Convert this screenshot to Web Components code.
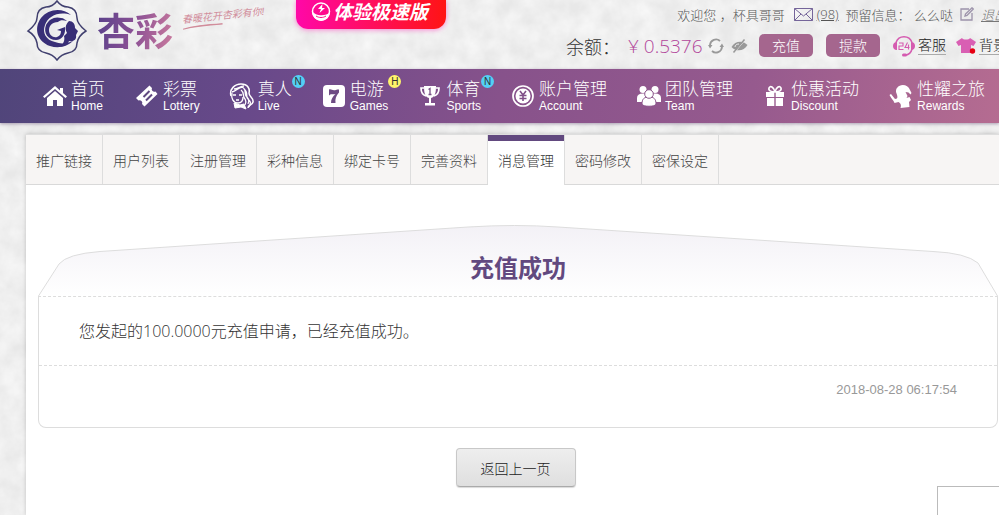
<!DOCTYPE html>
<html lang="zh-CN">
<head>
<meta charset="utf-8">
<title>杏彩 - 消息管理</title>
<style>
  html, body {
    margin: 0;
    height: 100%;
  }
  body {
    overflow: hidden;
    background: #eeeeee;
    color: #666;
    font: 14px "Open Sans", "Noto Sans CJK SC", sans-serif;
  }
</style>
</head>
<body>
<app-page>
  <site-header slot="header"></site-header>
  <main-nav slot="nav">
    <nav-item icon="home" label="首页" sub="Home"></nav-item>
    <nav-item icon="ticket" label="彩票" sub="Lottery"></nav-item>
    <nav-item icon="live" label="真人" sub="Live" badge="N"></nav-item>
    <nav-item icon="seven" label="电游" sub="Games" badge="H"></nav-item>
    <nav-item icon="cup" label="体育" sub="Sports" badge="N"></nav-item>
    <nav-item icon="coin" label="账户管理" sub="Account"></nav-item>
    <nav-item icon="team" label="团队管理" sub="Team"></nav-item>
    <nav-item icon="gift" label="优惠活动" sub="Discount"></nav-item>
    <nav-item icon="rewards" label="性耀之旅" sub="Rewards"></nav-item>
  </main-nav>
  <tab-bar>
    <tab-item>推广链接</tab-item>
    <tab-item>用户列表</tab-item>
    <tab-item>注册管理</tab-item>
    <tab-item>彩种信息</tab-item>
    <tab-item>绑定卡号</tab-item>
    <tab-item>完善资料</tab-item>
    <tab-item active>消息管理</tab-item>
    <tab-item>密码修改</tab-item>
    <tab-item>密保设定</tab-item>
  </tab-bar>
  <message-card>
    <span slot="title">充值成功</span>
    您发起的100.0000元充值申请，已经充值成功。
    <time slot="time" datetime="2018-08-28T06:17:54">2018-08-28 06:17:54</time>
  </message-card>
  <back-button>返回上一页</back-button>
</app-page>

<script>
const icons = {
  home: `<svg width="24" height="22" viewBox="0 0 24 22" fill="#fff"><path d="M12 1 0 11.500l1.500 1.500L12 4l10.500 9 1.500-1.500-4-3.500V3h-3v2.500z"/><path d="M12 6 4 13v8h6v-6h4v6h6v-8z"/></svg>`,
  ticket: `<svg width="24" height="24" viewBox="0 0 24 24"><path fill="#fff" d="M14.500 1.500 17 4a2.600 2.600 0 0 0 3.500 3.500L22.500 10 9.500 22.500 7 20a2.600 2.600 0 0 0-3.500-3.500L1 14z"/><path d="m8.500 13 6-6m-3.500 9.500 6-6" stroke="#604980" stroke-width="2"/></svg>`,
  live: `<svg width="26" height="27" viewBox="0 0 26 27" fill="none" stroke="#fff"><path d="M2 13C0 6 6 1 12 1c7 0 9 5 8 9 0 4 5 5 4 9-1 4-5 2-5 6" stroke-width="1.500"/><path d="M3 9c4-1 6-4 10-5 5 2 2 6 4 9 2 2 4 4 2 8M5 6c4 0 6-3 10-3M15 6c5 4 1 7 4 10 3 3 3 4 1 8M12 7c4 3 1 6 4 9 1 2 2 3 0 6" stroke-width="1.300"/><path d="M3 10c-1 5 1 10 6 10 4 0 5-3 5-6M4 12h3m3 0h3M7 17h3" stroke-width="1.300"/><path d="m5 20 6 2 4-1 2 5-5-2-6 1z" fill="#fff"/></svg>`,
  seven: `<svg width="22" height="22" viewBox="0 0 22 22"><rect width="22" height="22" rx="4" fill="#fff"/><path fill="#6d4b83" d="M6 4.500c2-.8 3 .8 5 .8 1.500 0 2-.8 5-.8v3c-3 3.500-4 6-3.500 10.500H8c0-4 1.500-6 4.500-9-2.500 1-4.500-1-6.500 1.500z"/></svg>`,
  cup: `<svg width="20" height="22" viewBox="0 0 20 22"><path d="M4 3H1c0 5 2 7 5 8m10-8h3c0 5-2 7-5 8" fill="none" stroke="#fff" stroke-width="1.700"/><path fill="#fff" d="M4 1h12c0 7-1 11-5 12v5h4v2.500H5V18h4v-5C5 12 4 8 4 1z"/><path d="m8.500 4.500 1.500-1v6M8.500 9.500h3" stroke="#765084" stroke-width="1.300" fill="none"/></svg>`,
  coin: `<svg width="22" height="22" viewBox="0 0 22 22"><circle cx="11" cy="11" r="10" fill="none" stroke="#fff" stroke-width="1.700"/><circle cx="11" cy="11" r="7.500" fill="#fff"/><path d="m8 6 3 4 3-4M7.500 10.500h7m-7 3h7M11 10v6" stroke="#805088" stroke-width="1.600" fill="none"/></svg>`,
  team: `<svg width="24" height="22" viewBox="0 0 24 22"><g fill="#fff"><circle cx="6" cy="4.500" r="3.500"/><circle cx="18" cy="4.500" r="3.500"/><path d="M0 17v-4c0-3 2-4.500 6-4.500S10 10 10 17zM14 17c0-7 0-8.500 4-8.500s6 1.500 6 4.500v4z"/></g><g fill="#fff" stroke="#8b548a"><path d="M5 19c0-5 2-7 7-7s7 2 7 7c0 3-14 3-14 0z"/><circle cx="12" cy="9" r="4.300"/></g></svg>`,
  gift: `<svg width="20" height="22" viewBox="0 0 20 22"><path fill="#fff" d="M1 7h8.300v5H1zM10.700 7H19v5h-8.300zM2 13h7.300v8H2zM10.700 13H18v8h-7.300z"/><path d="M10 7C7 7 3 6 4 3c1-3 5-1 6 4 1-5 5-7 6-4 1 3-3 4-6 4z" fill="none" stroke="#fff" stroke-width="1.600"/></svg>`,
  rewards: `<svg width="24" height="25" viewBox="0 0 24 25" fill="#fff"><path d="M8 4c4-5 11-3 13 2l1.500 3-1 1.500-2-2-3-.5 2 4-1 2 3-1 1.500 3-2 2 .5 5-9 1c1-3 0-5-2-6l-4 1c-1-3-3-4-5-8l1.500-1L6 15c4 0 2-4 1-7 0-2 0-3 1-4z"/></svg>`,
  mail: `<svg width="19" height="13" viewBox="0 0 19 13" fill="none" stroke="#75659a"><path d="M.5.5h18v12H.5zL9.500 8l9-7.500M.5 12.500 7 6m5 0 6.500 6.500"/></svg>`,
  edit: `<svg width="14" height="14" viewBox="0 0 14 14" fill="none" stroke="#9c93aa" stroke-width="1.300"><path d="M9 2H1v11h11V6"/><path d="m5 9 .5-2L12 .8 13.300 2 7 8.500z"/></svg>`,
  refresh: `<svg width="16" height="16" viewBox="0 0 16 16" fill="none" stroke="#999" stroke-width="1.800"><path d="M2 9V7a6 6 0 0 1 10-4M14 7v2a6 6 0 0 1-10 4"/><path d="M0 7h4.500L2 10.500zM11.500 9H16l-2-3.500z" fill="#999" stroke="none"/></svg>`,
  eye: `<svg width="17" height="14" viewBox="0 0 17 14"><path d="M.5 8C4 1.500 12 1 16.500 6 13 12.500 5 13 .5 8z" fill="#999"/><path d="M4 8c0-2 2-3 4-3" stroke="#eee" fill="none"/><path d="M3.500 13.500 14.500.5" stroke="#eee" stroke-width="1"/><path d="M2.500 13.500 13.500 .5" stroke="#999" stroke-width="1.500"/></svg>`,
  service: `<svg width="22" height="22" viewBox="0 0 22 22"><path d="M3 7.500a8.500 8.500 0 0 1 16 0M19 14c-1 4-4 6-7 6" fill="none" stroke="#d55bb0" stroke-width="1.500"/><path fill="#d55bb0" d="M4 7v8C1 15 0 13 0 11s1-4 4-4zM18 7v8c3 0 4-2 4-4s-1-4-4-4z"/><rect x="9" y="18.500" width="5" height="3" rx="1.500" fill="#d55bb0"/><path d="M6 8h4v3H6v3.500h4.500M14.500 7.500 12 12.500h4.500M15.500 9.500v5" fill="none" stroke="#d55bb0" stroke-width="1.100"/></svg>`,
  shirt: `<svg width="20" height="17" viewBox="0 0 20 17"><path fill="#d95fb3" d="M6 1c1 2 7 2 8 0l6 4-2.500 4-2.500-1v8H5V8L2.500 9 0 5z"/><circle cx="16.500" cy="14" r="2.700" fill="#e60012"/></svg>`,
  bolt: `<svg width="20" height="20" viewBox="0 0 20 20"><circle cx="10" cy="9.500" r="8.500" fill="none" stroke="#fff" stroke-width="1.500"/><path d="M1 9c3 5 14 6 18 1-1 12-17 12-18-1z" fill="#fff"/><path d="M11.500 2 7 7h3l-1.500 4L14 6h-3z" fill="#fff"/><path d="M5 14c3 2 7 2 10 0" stroke="#fb1488" fill="none"/></svg>`,
  logo: `<svg width="62" height="62" viewBox="0 0 62 62"><path fill="none" stroke="#41406f" stroke-width="1.500" d="M31 1c3 4 7 6 11 6 6 1 9 5 9 11 0 5 4 9 9 13-5 3-8 7-9 12 0 6-3 9-9 10-5 1-8 3-11 7-3-4-6-6-11-7-6-1-9-4-9-10-1-5-4-9-9-12 5-4 9-8 9-13 0-6 3-10 9-11 4 0 8-2 11-6z"/><path fill="#382e77" d="M45 15C36 7 22 9 15 18c-8 11-3 24 9 28 9 3 18 0 23-5-7 3-13 3-18 1-9-2-13-9-10-17 3-9 14-14 26-10z"/><path fill="#382e77" d="M20 25c3-6 9-9 15-7 3 0 4 2 6 3-4-1-7-1-9 1-6 0-9 4-9 8 0 5 4 8 8 7 3-1 4-3 4-6l-4-1 8-3c1 7-3 13-9 13-8 0-13-7-10-15z"/><path fill="#382e77" d="M43 21c4 0 6 3 6 7l3 3-2 4c1 5-3 7-7 6-1 4-5 5-9 6 4-4 5-7 4-11l3-3c-2-4-2-8 2-12z"/></svg>`
};

function define(name, css, html) {
  customElements.define(name, class extends HTMLElement {
    connectedCallback() {
      if (this.shadowRoot) return;
      const root = this.attachShadow({mode: 'open'});
      root.innerHTML = `
        <style>
          * { box-sizing: border-box; }
          ${css}
        </style>
        ${typeof html === 'function' ? html(this) : html}
      `;
    }
  });
}

define('ui-icon', `
  :host { display: inline-flex; flex: none; }
  svg { display: block; }
`, el => icons[el.getAttribute('name')].replace('<svg', '<svg aria-hidden="true"'));

define('app-page', `
  :host {
    display: flex;
    flex-direction: column;
    min-height: 100vh;
    position: relative;
    overflow: hidden;
    font-weight: 300;
  }
  .paper {
    position: absolute;
    inset: 0;
    width: 100%;
    height: 100%;
    z-index: -1;
  }
  main {
    flex: 1;
    margin: 11px 0 0 26px;
    background: #fff;
    border-top: 1px solid #dedede;
    box-shadow: 0 0 4px rgba(0, 0, 0, .2);
  }
  .float {
    position: absolute;
    right: 0;
    bottom: 0;
    width: 62px;
    height: 29px;
    background: #fff;
    border: solid #bbb;
    border-width: 1px 0 0 1px;
  }
`, `
  <svg class="paper" aria-hidden="true">
    <filter id="grain" x="0" y="0" width="100%" height="100%">
      <feTurbulence type="fractalNoise" baseFrequency=".05" numOctaves="4" seed="4"/>
      <feColorMatrix values="0 0 0 0 1  0 0 0 0 1  0 0 0 0 1  1 0 0 0 -.200"/>
    </filter>
    <rect width="100%" height="100%" fill="#e8e8e8"/>
    <rect width="100%" height="100%" filter="url(#grain)"/>
  </svg>
  <slot name="header"></slot>
  <slot name="nav"></slot>
  <main><slot></slot></main>
  <div class="float"></div>
`);

define('site-header', `
  :host {
    display: flex;
    align-items: flex-start;
    height: 69px;
    padding-left: 26px;
  }
  brand-logo { width: 270px; flex: none; }
  account-bar { margin-left: 120px; flex: none; }
`, `
  <brand-logo></brand-logo>
  <promo-link>体验极速版</promo-link>
  <account-bar></account-bar>
`);

define('brand-logo', `
  :host { display: flex; align-items: flex-start; gap: 9px; }
  .name {
    margin-top: 4px;
    font-size: 38px;
    line-height: 52px;
    font-weight: 700;
    background: linear-gradient(100deg, #57408a, #8c5195 50%, #cc7c9e);
    -webkit-background-clip: text;
    background-clip: text;
    color: transparent;
  }
  .slogan {
    color: #d18c9b;
    font-size: 10px;
    line-height: 14px;
    font-weight: 400;
    font-style: italic;
    white-space: nowrap;
    margin-top: 8px;
    transform: rotate(-6deg);
  }
  .slogan svg { display: block; }
`, `
  <ui-icon name="logo"></ui-icon>
  <span class="name">杏彩</span>
  <span class="slogan">春暖花开杏彩有你!
    <svg width="40" height="4" viewBox="0 0 40 4"><path d="M0 3Q14 0 40 2 14 1 0 3z" fill="#d18c9b" stroke="#d18c9b"/></svg>
  </span>
`);

define('promo-link', `
  :host { display: block; flex: none; }
  a {
    display: flex;
    align-items: center;
    gap: 2px;
    width: 150px;
    height: 29px;
    padding: 0 0 5px 15px;
    border-radius: 0 0 12px 12px;
    background: linear-gradient(90deg, #ff08a8, #ff1414);
    box-shadow: 0 1px 5px rgba(255, 60, 190, .6);
    color: #fff;
    font-size: 19px;
    font-weight: 700;
    font-style: italic;
    line-height: 24px;
    white-space: nowrap;
    text-decoration: none;
  }
`, `<a href="#"><ui-icon name="bolt"></ui-icon><slot></slot></a>`);

define('account-bar', `
  :host {
    display: flex;
    flex-direction: column;
    align-items: flex-end;
    gap: 9px;
    padding-top: 4px;
    white-space: nowrap;
  }
  .row { display: flex; align-items: center; }
  .top { height: 20px; gap: 7px; font-size: 13px; color: #555; }
  .top a { color: #555; }
  .mail { display: flex; align-items: center; gap: 4px; margin-left: 2px; }
  .top .exit { font-style: italic; color: #777; }
  .money { height: 25px; }
  .label { color: #333; font-size: 18px; width: 62px; }
  .sum { color: #b2479b; font-size: 19px; width: 80px; }
  .tools { gap: 7px; display: flex; align-items: center; margin-right: 11px; }
  button {
    border: 0;
    padding: 0;
    background: none;
    display: flex;
    font: inherit;
  }
  .pill {
    width: 54px;
    height: 23px;
    justify-content: center;
    align-items: center;
    margin-right: 13px;
    border-radius: 5px;
    background: #a5668e;
    color: #fff;
    font-size: 14px;
    line-height: 20px;
  }
  .link {
    display: flex;
    align-items: center;
    gap: 3px;
    color: #222;
    font-size: 14px;
    line-height: 18px;
    text-decoration: none;
  }
  .link span { border-bottom: 1px solid #aaa; }
  .link + .link { margin-left: 10px; }
`, `
  <div class="row top">
    <span>欢迎您 ，杯具哥哥</span>
    <span class="mail"><ui-icon name="mail"></ui-icon><a href="#">(98)</a></span>
    <span>预留信息： 么么哒</span>
    <button aria-label="修改"><ui-icon name="edit"></ui-icon></button>
    <a class="exit" href="#">退出</a>
  </div>
  <div class="row money">
    <span class="label">余额：</span>
    <span class="sum">¥ 0.5376</span>
    <span class="tools">
      <button aria-label="刷新"><ui-icon name="refresh"></ui-icon></button>
      <button aria-label="隐藏"><ui-icon name="eye"></ui-icon></button>
    </span>
    <button class="pill">充值</button>
    <button class="pill">提款</button>
    <a class="link" href="#"><ui-icon name="service"></ui-icon><span>客服</span></a>
    <a class="link" href="#"><ui-icon name="shirt"></ui-icon><span>背景</span></a>
  </div>
`);

define('main-nav', `
  :host { display: block; }
  nav {
    display: flex;
    align-items: center;
    gap: 30px;
    height: 54px;
    padding-left: 43px;
    background: linear-gradient(100deg, #50457a, #68498a 25%, #87528b 50%, #965a8e 75%, #b56c91);
    box-shadow: 0 1px 3px rgba(70, 40, 90, .4);
  }
`, `<nav><slot></slot></nav>`);

define('nav-item', `
  :host { display: block; flex: none; }
  a {
    display: flex;
    align-items: center;
    gap: 4px;
    color: #fff;
    text-decoration: none;
  }
  .icon { display: flex; justify-content: center; width: 24px; }
  .text { position: relative; white-space: nowrap; }
  .label { display: block; font-size: 17px; line-height: 20px; }
  .sub { display: block; font: 12px/14px "Liberation Sans", sans-serif; }
  .badge {
    position: absolute;
    top: -4px;
    right: -13px;
    width: 13px;
    height: 13px;
    border-radius: 50%;
    background: #53d0f5;
    color: #333;
    font: 10px/13px "Liberation Sans", sans-serif;
    text-align: center;
  }
  .H { background: #fff56b; }
`, el => {
  const badge = el.getAttribute('badge');
  return `
    <a href="#">
      <span class="icon"><ui-icon name="${el.getAttribute('icon')}"></ui-icon></span>
      <span class="text">
        <span class="label">${el.getAttribute('label')}</span>
        <span class="sub">${el.getAttribute('sub')}</span>
        ${badge ? `<span class="badge ${badge}">${badge}</span>` : ''}
      </span>
    </a>
  `;
});

define('tab-bar', `
  :host {
    display: flex;
    height: 49px;
    background: #f7f5f4;
    border-bottom: 1px solid #d9d9d9;
  }
`, `<slot></slot>`);

define('tab-item', `
  :host { display: block; flex: none; height: 49px; border-right: 1px solid #ddd; }
  :host([active]) {
    height: 50px;
    background: #fff;
  }
  a {
    display: block;
    padding: 0 10px;
    font-size: 14px;
    line-height: 51px;
    color: #444;
    text-decoration: none;
  }
  :host([active]) a {
    box-shadow: inset 0 6px #62497f;
    color: #333;
  }
`, `<a href="#"><slot></slot></a>`);

define('message-card', `
  :host { display: block; margin: 40px 1px 0 12px; }
  header {
    position: relative;
    height: 71px;
    padding-top: 25px;
  }
  header svg {
    position: absolute;
    inset: 0;
    width: 100%;
    height: 100%;
  }
  h1 {
    position: relative;
    margin: 0;
    color: #62497f;
    font-size: 24px;
    line-height: 36px;
    text-align: center;
  }
  .body {
    border: 1px solid #ddd;
    border-top: 1px dashed #ddd;
    border-radius: 0 0 8px 8px;
  }
  p {
    margin: 0;
    padding: 22px 40px;
    border-bottom: 1px dashed #ddd;
    color: #333;
    font-size: 16px;
    line-height: 24px;
  }
  footer {
    padding: 14px 40px 27px;
    color: #999;
    font: 13px/20px "Liberation Sans", sans-serif;
    text-align: right;
  }
`, `
  <header>
    <svg viewBox="0 0 960 71" preserveAspectRatio="none" aria-hidden="true">
      <linearGradient id="fade" x2="0" y2="1">
        <stop stop-color="#f3f1f6"/>
        <stop offset="1" stop-color="#fff"/>
      </linearGradient>
      <path d="M.5 71 21 39Q29 29 62 26.500L430 2Q478-1 520 2L895 26.500Q928 28 940 38L959.500 71" fill="url(#fade)" stroke="#ddd"/>
    </svg>
    <h1><slot name="title"></slot></h1>
  </header>
  <div class="body">
    <p><slot></slot></p>
    <footer><slot name="time"></slot></footer>
  </div>
`);

define('back-button', `
  :host { display: flex; justify-content: center; margin: 20px 0 20px 6px; }
  button {
    padding: 0 24px;
    height: 39px;
    border: 1px solid #c8c8c8;
    border-bottom-color: #aaa;
    border-radius: 4px;
    background: linear-gradient(#eee, #dfdfdf);
    box-shadow: 0 1px 1px rgba(0, 0, 0, .15);
    color: #222;
    font: inherit;
  }
`, `<button><slot></slot></button>`);
</script>
</body>
</html>
